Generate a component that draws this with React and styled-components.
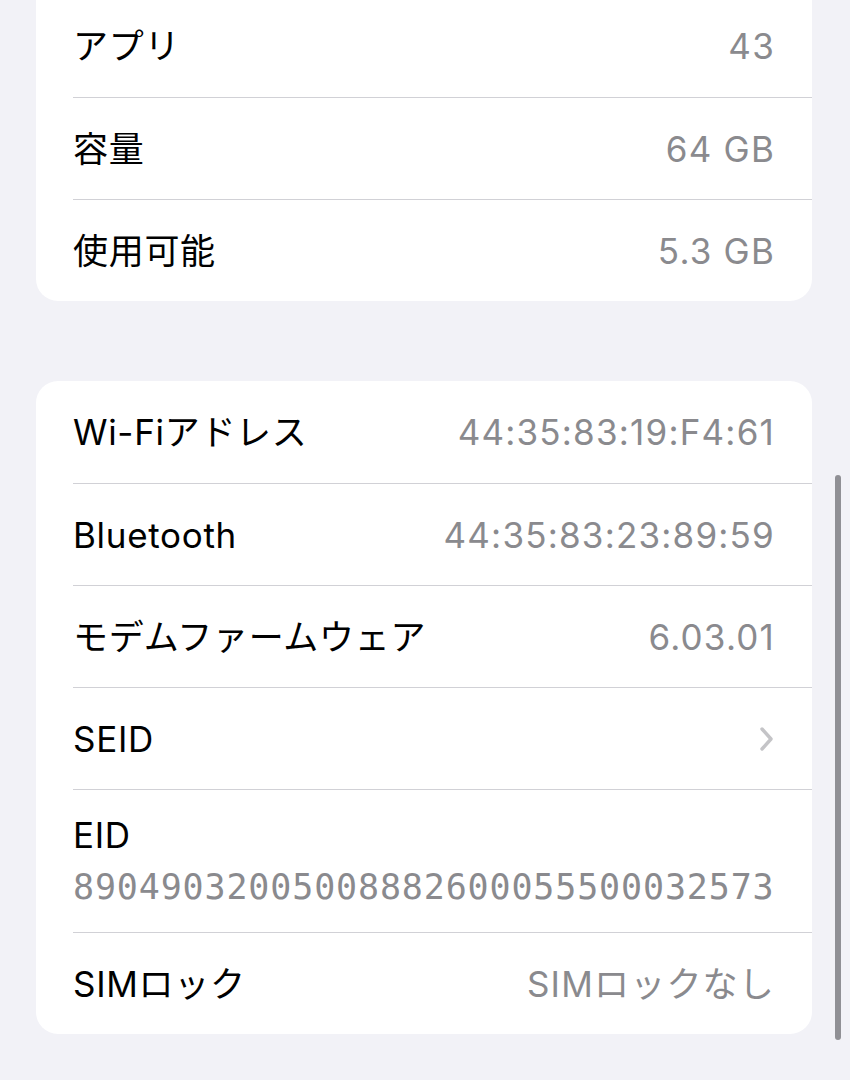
import React from "react";
import styled, { createGlobalStyle } from "styled-components";

const GlobalStyle = createGlobalStyle`
  html, body {
    margin: 0;
    padding: 0;
    background: #f2f2f7;
    overflow: hidden;
  }
  body {
    font-family: Inter, "Noto Sans CJK JP", sans-serif;
    -webkit-font-smoothing: antialiased;
  }
`;

const Pantalla = styled.div`
  position: relative;
  width: 850px;
  height: 1080px;
  overflow: hidden;
  background: #f2f2f7;
`;

const Lista = styled.div`
  display: flex;
  flex-direction: column;
  gap: 80px;
  padding: 0 38px 0 36px;
  margin-top: -40px;
`;

const Tarjeta = styled.div`
  background: #ffffff;
  border-radius: 22px;
  overflow: hidden;
  padding-top: ${(props) => (props.arriba ? props.arriba : 0)}px;
`;

const Fila = styled.div`
  display: flex;
  align-items: center;
  justify-content: space-between;
  height: 102px;
  margin-left: 37px;
  padding-right: 37px;
  box-sizing: border-box;
  border-top: ${(props) => (props.primera ? "none" : "1.5px solid #d1d1d6")};
`;

const FilaDoble = styled.div`
  display: flex;
  flex-direction: column;
  justify-content: center;
  gap: 4px;
  height: 143px;
  margin-left: 37px;
  padding-right: 37px;
  box-sizing: border-box;
  border-top: 1.5px solid #d1d1d6;
`;

const Etiqueta = styled.span`
  font-size: 35px;
  color: #000000;
  letter-spacing: 0.7px;
  line-height: 48px;
`;

const Valor = styled.span`
  font-size: 35px;
  color: #8a8a8e;
  letter-spacing: 1.2px;
  line-height: 48px;
  white-space: nowrap;
`;

const ValorMono = styled.span`
  font-family: "DejaVu Sans Mono", "Liberation Mono", monospace;
  font-size: 35px;
  color: #8a8a8e;
  letter-spacing: 0.85px;
  line-height: 48px;
`;

const Flecha = styled.svg`
  width: 15px;
  height: 26px;
  margin-right: 1px;
`;

const BarraScroll = styled.div`
  position: absolute;
  right: 9px;
  top: 475px;
  width: 6px;
  height: 565px;
  border-radius: 3px;
  background: #909095;
`;

const almacenamiento = [
  { etiqueta: "アプリ", valor: "43" },
  { etiqueta: "容量", valor: "64 GB" },
  { etiqueta: "使用可能", valor: "5.3 GB" },
];

const red = [
  { etiqueta: "Wi-Fiアドレス", valor: "44:35:83:19:F4:61" },
  { etiqueta: "Bluetooth", valor: "44:35:83:23:89:59" },
  { etiqueta: "モデムファームウェア", valor: "6.03.01" },
];

const App = () => {
  return (
    <>
      <GlobalStyle />
      <Pantalla>
        <Lista>
          <Tarjeta arriba={35}>
            {almacenamiento.map((fila, i) => (
              <Fila key={fila.etiqueta} primera={i === 0}>
                <Etiqueta>{fila.etiqueta}</Etiqueta>
                <Valor>{fila.valor}</Valor>
              </Fila>
            ))}
          </Tarjeta>

          <Tarjeta>
            {red.map((fila, i) => (
              <Fila key={fila.etiqueta} primera={i === 0}>
                <Etiqueta>{fila.etiqueta}</Etiqueta>
                <Valor>{fila.valor}</Valor>
              </Fila>
            ))}
            <Fila>
              <Etiqueta>SEID</Etiqueta>
              <Flecha viewBox="0 0 15 26">
                <path
                  d="M3 3 L12 13 L3 23"
                  fill="none"
                  stroke="#c4c4c7"
                  strokeWidth="3.4"
                  strokeLinecap="round"
                  strokeLinejoin="round"
                />
              </Flecha>
            </Fila>
            <FilaDoble>
              <Etiqueta>EID</Etiqueta>
              <ValorMono>89049032005008882600055500032573</ValorMono>
            </FilaDoble>
            <Fila>
              <Etiqueta>SIMロック</Etiqueta>
              <Valor>SIMロックなし</Valor>
            </Fila>
          </Tarjeta>
        </Lista>
        <BarraScroll />
      </Pantalla>
    </>
  );
};

export default App;
